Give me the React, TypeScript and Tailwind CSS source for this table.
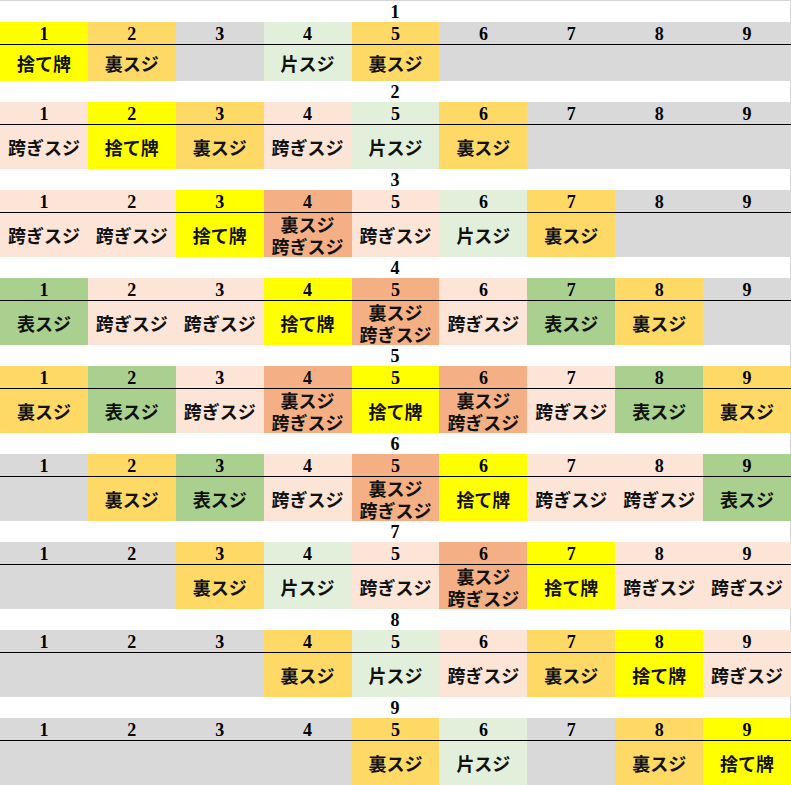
type Kind = 'sute' | 'ura' | 'kata' | 'matagi' | 'uraMatagi' | 'omote' | 'none';

const cellStyles: Record<Kind, string> = {
  sute: 'bg-[#ffff00]',
  ura: 'bg-[#ffd966]',
  kata: 'bg-[#e2efda]',
  matagi: 'bg-[#fce4d6]',
  uraMatagi: 'bg-[#f4b084]',
  omote: 'bg-[#a9d08e]',
  none: 'bg-[#d9d9d9]',
};

const labels: Record<Kind, string[]> = {
  sute: ['捨て牌'],
  ura: ['裏スジ'],
  kata: ['片スジ'],
  matagi: ['跨ぎスジ'],
  uraMatagi: ['裏スジ', '跨ぎスジ'],
  omote: ['表スジ'],
  none: [],
};

const sections: Kind[][] = [
  ['sute', 'ura', 'none', 'kata', 'ura', 'none', 'none', 'none', 'none'],
  ['matagi', 'sute', 'ura', 'matagi', 'kata', 'ura', 'none', 'none', 'none'],
  ['matagi', 'matagi', 'sute', 'uraMatagi', 'matagi', 'kata', 'ura', 'none', 'none'],
  ['omote', 'matagi', 'matagi', 'sute', 'uraMatagi', 'matagi', 'omote', 'ura', 'none'],
  ['ura', 'omote', 'matagi', 'uraMatagi', 'sute', 'uraMatagi', 'matagi', 'omote', 'ura'],
  ['none', 'ura', 'omote', 'matagi', 'uraMatagi', 'sute', 'matagi', 'matagi', 'omote'],
  ['none', 'none', 'ura', 'kata', 'matagi', 'uraMatagi', 'sute', 'matagi', 'matagi'],
  ['none', 'none', 'none', 'ura', 'kata', 'matagi', 'ura', 'sute', 'matagi'],
  ['none', 'none', 'none', 'none', 'ura', 'kata', 'none', 'ura', 'sute'],
];

const serif = "font-['Liberation_Serif','Times_New_Roman',serif]";

function Section({ n, cells }: { n: number; cells: Kind[] }) {
  return (
    <div>
      <div className={`h-[21px] flex items-center justify-center bg-white border-r border-[#d4d4d4] text-[18px] font-bold leading-none text-black ${serif}`}>
        {n}
      </div>
      <div className="grid grid-cols-9 h-[23px] border-b border-black">
        {cells.map((k, i) => (
          <div key={i} className={`flex items-center justify-center pt-[1px] text-[18px] font-bold leading-none text-black ${serif} ${cellStyles[k]}`}>
            {i + 1}
          </div>
        ))}
      </div>
      <div className={`grid grid-cols-9 ${n === 1 ? 'h-[36px]' : 'h-[44px]'}`}>
        {cells.map((k, i) => (
          <div
            key={i}
            className={`flex flex-col items-center justify-center text-[18px] leading-[22px] font-bold text-[#111] font-['Noto_Sans_CJK_JP','Noto_Sans_CJK_SC',sans-serif] ${cellStyles[k]}`}
          >
            {labels[k].map((t) => (
              <span key={t}>{t}</span>
            ))}
          </div>
        ))}
      </div>
    </div>
  );
}

export default function App() {
  return (
    <div className="w-[791px] h-[785px] bg-white border-t border-[#d4d4d4] overflow-hidden">
      {sections.map((cells, idx) => (
        <Section key={idx} n={idx + 1} cells={cells} />
      ))}
    </div>
  );
}
